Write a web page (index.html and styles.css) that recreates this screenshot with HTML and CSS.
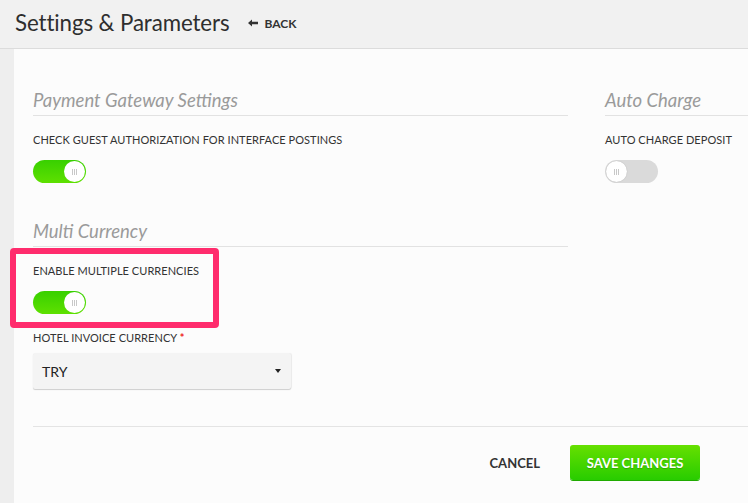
FILE: index.html
```html
<!DOCTYPE html>
<html>
<head>
<meta charset="utf-8">
<link rel="stylesheet" href="styles.css">
</head>
<body>
<header class="topbar">
  <h1 class="title">Settings &amp; Parameters</h1>
  <a class="back"><svg class="back-arrow" width="10" height="8" viewBox="0 0 10 8"><path d="M0 4 L4 0.5 L4 2.8 L10 2.8 L10 5.2 L4 5.2 L4 7.5 Z" fill="#333"/></svg>BACK</a>
</header>
<div class="main">
  <div class="strip"></div>
  <div class="content">
    <div class="sections">
      <div class="col-left">
        <section class="group">
          <h2 class="group-title">Payment Gateway Settings</h2>
          <div class="field">
            <div class="label">CHECK GUEST AUTHORIZATION FOR INTERFACE POSTINGS</div>
            <div class="toggle on"><span class="knob"><i></i><i></i><i></i></span></div>
          </div>
        </section>
        <section class="group group-multi">
          <h2 class="group-title">Multi Currency</h2>
          <div class="field highlighted">
            <div class="label">ENABLE MULTIPLE CURRENCIES</div>
            <div class="toggle on"><span class="knob"><i></i><i></i><i></i></span></div>
          </div>
          <div class="field field-select">
            <div class="label">HOTEL INVOICE CURRENCY <span class="req">*</span></div>
            <div class="select"><span>TRY</span><span class="caret"></span></div>
          </div>
        </section>
      </div>
      <div class="col-right">
        <section class="group">
          <h2 class="group-title">Auto Charge</h2>
          <div class="field">
            <div class="label">AUTO CHARGE DEPOSIT</div>
            <div class="toggle off"><span class="knob"><i></i><i></i><i></i></span></div>
          </div>
        </section>
      </div>
    </div>
    <div class="actions">
      <button class="btn-cancel">CANCEL</button>
      <button class="btn-save">SAVE CHANGES</button>
    </div>
  </div>
</div>
</body>
</html>
```

FILE: styles.css
```css
*, *::before, *::after { box-sizing: border-box; }
html, body { margin: 0; padding: 0; }
body {
  width: 748px;
  height: 503px;
  overflow: hidden;
  font-family: Lato, "Noto Sans", sans-serif;
  color: #333;
  background: #fcfcfc;
}
.topbar {
  height: 49px;
  background: #f1f1f1;
  border-bottom: 1px solid #dcdcdc;
  display: flex;
  align-items: center;
  padding-left: 15px;
  padding-bottom: 4px;
}
.title {
  margin: 0;
  font-weight: 400;
  font-size: 22.3px;
  color: #2e2e2e;
  letter-spacing: -0.1px;
}
.back {
  margin-left: 18px;
  font-size: 12px;
  font-weight: 700;
  color: #333;
  display: flex;
  align-items: center;
  margin-top: 2px;
}
.back-arrow {
  margin-right: 7px;
}
.main {
  display: flex;
  height: 454px;
}
.strip {
  width: 14px;
  background: #eeeeee;
  flex: none;
}
.content {
  flex: 1;
  background: #fcfcfc;
  padding: 40px 0 0 19px;
}
.sections {
  display: flex;
  gap: 37px;
}
.col-left { width: 535px; flex: none; }
.col-right { flex: 1; }
.group-title {
  margin: 0;
  font-size: 18.5px;
  font-weight: 400;
  font-style: italic;
  color: #9a9a9a;
  line-height: 23px;
  padding-bottom: 3px;
  border-bottom: 1px solid #e2e2e2;
}
.field { padding-top: 17px; }
.label {
  font-size: 11px;
  line-height: 14px;
  color: #333;
  letter-spacing: 0.05px;
}
.req { color: #e22; font-weight: 700; }
.toggle {
  margin-top: 13px;
  width: 53px;
  height: 23px;
  border-radius: 12px;
  position: relative;
}
.toggle.on {
  background: linear-gradient(to bottom, #38d000, #5ee000);
}
.toggle.off {
  background: #dadada;
}
.knob {
  position: absolute;
  top: 1px;
  width: 21px;
  height: 21px;
  border-radius: 50%;
  background: #fff;
  display: flex;
  justify-content: center;
  align-items: center;
  gap: 1px;
}
.toggle.on .knob { right: 1px; }
.toggle.off .knob { left: 1px; box-shadow: 0 0 1px rgba(0,0,0,0.25); }
.knob i {
  width: 1px;
  height: 6px;
  background: #c8c8c8;
}
.group-multi { margin-top: 37px; }
.highlighted { position: relative; padding-top: 17px; }
.highlighted::before {
  content: "";
  position: absolute;
  left: -23px;
  top: 1px;
  width: 209px;
  height: 80px;
  border: 6px solid #ff2c6d;
  border-radius: 4px;
}
.field-select { padding-top: 17px; }
.select {
  margin-top: 8px;
  width: 258px;
  height: 36px;
  background: #f4f4f4;
  box-shadow: 0 1px 1px rgba(0,0,0,0.18), 1px 0 1px rgba(0,0,0,0.06);
  border-radius: 2px;
  display: flex;
  align-items: center;
  justify-content: space-between;
  padding: 0 10px 0 9px;
  font-size: 14px;
  color: #222;
}
.caret {
  width: 0;
  height: 0;
  border-left: 3.5px solid transparent;
  border-right: 3.5px solid transparent;
  border-top: 4px solid #222;
}
.actions {
  margin-top: 37px;
  border-top: 1px solid #e4e4e4;
  display: flex;
  justify-content: flex-end;
  align-items: center;
  padding: 18px 48px 0 0;
}
.btn-cancel {
  border: none;
  background: none;
  font-family: inherit;
  font-size: 13px;
  font-weight: 700;
  color: #333;
  padding: 0;
  margin-right: 30px;
}
.btn-save {
  border: none;
  font-family: inherit;
  font-size: 13px;
  font-weight: 700;
  color: #fff;
  width: 130px;
  height: 35px;
  border-radius: 3px;
  background: linear-gradient(to bottom, #66e000, #28cc00);
  box-shadow: 0 1px 0 #1faa00;
  text-shadow: 0 1px 1px rgba(0,0,0,0.2);
}
```
